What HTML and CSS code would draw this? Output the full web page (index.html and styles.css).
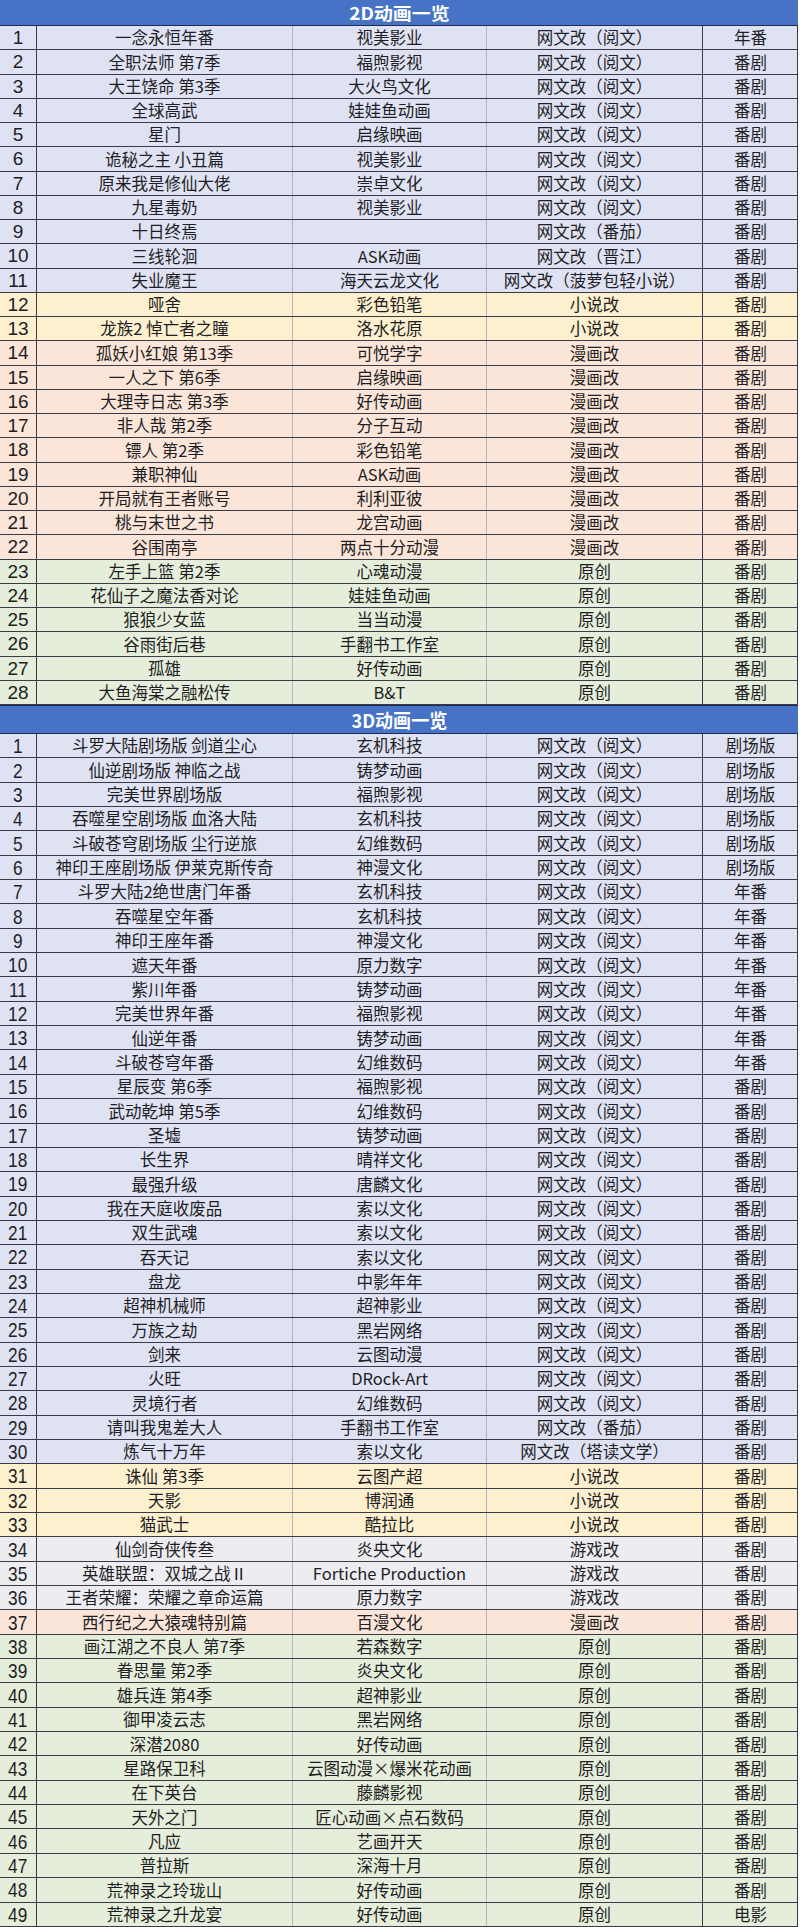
FILE: index.html
```html
<!DOCTYPE html>
<html lang="zh-CN">
<head>
<meta charset="utf-8">
<title>动画一览</title>
<link rel="stylesheet" href="styles.css">
</head>
<body>
<div class="sheet">
  <section class="block b2d">
    <div class="title"><span>2D动画一览</span></div>
    <div class="row lav"><div class="c"><span>1</span></div><div class="c"><span>一念永恒年番</span></div><div class="c"><span>视美影业</span></div><div class="c"><span>网文改（阅文）</span></div><div class="c"><span>年番</span></div></div>
    <div class="row lav"><div class="c"><span>2</span></div><div class="c"><span>全职法师 第7季</span></div><div class="c"><span>福煦影视</span></div><div class="c"><span>网文改（阅文）</span></div><div class="c"><span>番剧</span></div></div>
    <div class="row lav"><div class="c"><span>3</span></div><div class="c"><span>大王饶命 第3季</span></div><div class="c"><span>大火鸟文化</span></div><div class="c"><span>网文改（阅文）</span></div><div class="c"><span>番剧</span></div></div>
    <div class="row lav"><div class="c"><span>4</span></div><div class="c"><span>全球高武</span></div><div class="c"><span>娃娃鱼动画</span></div><div class="c"><span>网文改（阅文）</span></div><div class="c"><span>番剧</span></div></div>
    <div class="row lav"><div class="c"><span>5</span></div><div class="c"><span>星门</span></div><div class="c"><span>启缘映画</span></div><div class="c"><span>网文改（阅文）</span></div><div class="c"><span>番剧</span></div></div>
    <div class="row lav"><div class="c"><span>6</span></div><div class="c"><span>诡秘之主 小丑篇</span></div><div class="c"><span>视美影业</span></div><div class="c"><span>网文改（阅文）</span></div><div class="c"><span>番剧</span></div></div>
    <div class="row lav"><div class="c"><span>7</span></div><div class="c"><span>原来我是修仙大佬</span></div><div class="c"><span>崇卓文化</span></div><div class="c"><span>网文改（阅文）</span></div><div class="c"><span>番剧</span></div></div>
    <div class="row lav"><div class="c"><span>8</span></div><div class="c"><span>九星毒奶</span></div><div class="c"><span>视美影业</span></div><div class="c"><span>网文改（阅文）</span></div><div class="c"><span>番剧</span></div></div>
    <div class="row lav"><div class="c"><span>9</span></div><div class="c"><span>十日终焉</span></div><div class="c"></div><div class="c"><span>网文改（番茄）</span></div><div class="c"><span>番剧</span></div></div>
    <div class="row lav"><div class="c"><span>10</span></div><div class="c"><span>三线轮洄</span></div><div class="c"><span>ASK动画</span></div><div class="c"><span>网文改（晋江）</span></div><div class="c"><span>番剧</span></div></div>
    <div class="row lav"><div class="c"><span>11</span></div><div class="c"><span>失业魔王</span></div><div class="c"><span>海天云龙文化</span></div><div class="c"><span>网文改（菠萝包轻小说）</span></div><div class="c"><span>番剧</span></div></div>
    <div class="row yel"><div class="c"><span>12</span></div><div class="c"><span>哑舍</span></div><div class="c"><span>彩色铅笔</span></div><div class="c"><span>小说改</span></div><div class="c"><span>番剧</span></div></div>
    <div class="row yel"><div class="c"><span>13</span></div><div class="c"><span>龙族2 悼亡者之瞳</span></div><div class="c"><span>洛水花原</span></div><div class="c"><span>小说改</span></div><div class="c"><span>番剧</span></div></div>
    <div class="row pea"><div class="c"><span>14</span></div><div class="c"><span>孤妖小红娘 第13季</span></div><div class="c"><span>可悦学字</span></div><div class="c"><span>漫画改</span></div><div class="c"><span>番剧</span></div></div>
    <div class="row pea"><div class="c"><span>15</span></div><div class="c"><span>一人之下 第6季</span></div><div class="c"><span>启缘映画</span></div><div class="c"><span>漫画改</span></div><div class="c"><span>番剧</span></div></div>
    <div class="row pea"><div class="c"><span>16</span></div><div class="c"><span>大理寺日志 第3季</span></div><div class="c"><span>好传动画</span></div><div class="c"><span>漫画改</span></div><div class="c"><span>番剧</span></div></div>
    <div class="row pea"><div class="c"><span>17</span></div><div class="c"><span>非人哉 第2季</span></div><div class="c"><span>分子互动</span></div><div class="c"><span>漫画改</span></div><div class="c"><span>番剧</span></div></div>
    <div class="row pea"><div class="c"><span>18</span></div><div class="c"><span>镖人 第2季</span></div><div class="c"><span>彩色铅笔</span></div><div class="c"><span>漫画改</span></div><div class="c"><span>番剧</span></div></div>
    <div class="row pea"><div class="c"><span>19</span></div><div class="c"><span>兼职神仙</span></div><div class="c"><span>ASK动画</span></div><div class="c"><span>漫画改</span></div><div class="c"><span>番剧</span></div></div>
    <div class="row pea"><div class="c"><span>20</span></div><div class="c"><span>开局就有王者账号</span></div><div class="c"><span>利利亚彼</span></div><div class="c"><span>漫画改</span></div><div class="c"><span>番剧</span></div></div>
    <div class="row pea"><div class="c"><span>21</span></div><div class="c"><span>桃与末世之书</span></div><div class="c"><span>龙宫动画</span></div><div class="c"><span>漫画改</span></div><div class="c"><span>番剧</span></div></div>
    <div class="row pea"><div class="c"><span>22</span></div><div class="c"><span>谷围南亭</span></div><div class="c"><span>两点十分动漫</span></div><div class="c"><span>漫画改</span></div><div class="c"><span>番剧</span></div></div>
    <div class="row grn"><div class="c"><span>23</span></div><div class="c"><span>左手上篮 第2季</span></div><div class="c"><span>心魂动漫</span></div><div class="c"><span>原创</span></div><div class="c"><span>番剧</span></div></div>
    <div class="row grn"><div class="c"><span>24</span></div><div class="c"><span>花仙子之魔法香对论</span></div><div class="c"><span>娃娃鱼动画</span></div><div class="c"><span>原创</span></div><div class="c"><span>番剧</span></div></div>
    <div class="row grn"><div class="c"><span>25</span></div><div class="c"><span>狼狼少女蓝</span></div><div class="c"><span>当当动漫</span></div><div class="c"><span>原创</span></div><div class="c"><span>番剧</span></div></div>
    <div class="row grn"><div class="c"><span>26</span></div><div class="c"><span>谷雨街后巷</span></div><div class="c"><span>手翻书工作室</span></div><div class="c"><span>原创</span></div><div class="c"><span>番剧</span></div></div>
    <div class="row grn"><div class="c"><span>27</span></div><div class="c"><span>孤雄</span></div><div class="c"><span>好传动画</span></div><div class="c"><span>原创</span></div><div class="c"><span>番剧</span></div></div>
    <div class="row grn"><div class="c"><span>28</span></div><div class="c"><span>大鱼海棠之融松传</span></div><div class="c"><span>B&amp;T</span></div><div class="c"><span>原创</span></div><div class="c"><span>番剧</span></div></div>
  </section>
  <section class="block b3d">
    <div class="title"><span>3D动画一览</span></div>
    <div class="row lav"><div class="c"><span>1</span></div><div class="c"><span>斗罗大陆剧场版 剑道尘心</span></div><div class="c"><span>玄机科技</span></div><div class="c"><span>网文改（阅文）</span></div><div class="c"><span>剧场版</span></div></div>
    <div class="row lav"><div class="c"><span>2</span></div><div class="c"><span>仙逆剧场版 神临之战</span></div><div class="c"><span>铸梦动画</span></div><div class="c"><span>网文改（阅文）</span></div><div class="c"><span>剧场版</span></div></div>
    <div class="row lav"><div class="c"><span>3</span></div><div class="c"><span>完美世界剧场版</span></div><div class="c"><span>福煦影视</span></div><div class="c"><span>网文改（阅文）</span></div><div class="c"><span>剧场版</span></div></div>
    <div class="row lav"><div class="c"><span>4</span></div><div class="c"><span>吞噬星空剧场版 血洛大陆</span></div><div class="c"><span>玄机科技</span></div><div class="c"><span>网文改（阅文）</span></div><div class="c"><span>剧场版</span></div></div>
    <div class="row lav"><div class="c"><span>5</span></div><div class="c"><span>斗破苍穹剧场版 尘行逆旅</span></div><div class="c"><span>幻维数码</span></div><div class="c"><span>网文改（阅文）</span></div><div class="c"><span>剧场版</span></div></div>
    <div class="row lav"><div class="c"><span>6</span></div><div class="c"><span>神印王座剧场版 伊莱克斯传奇</span></div><div class="c"><span>神漫文化</span></div><div class="c"><span>网文改（阅文）</span></div><div class="c"><span>剧场版</span></div></div>
    <div class="row lav"><div class="c"><span>7</span></div><div class="c"><span>斗罗大陆2绝世唐门年番</span></div><div class="c"><span>玄机科技</span></div><div class="c"><span>网文改（阅文）</span></div><div class="c"><span>年番</span></div></div>
    <div class="row lav"><div class="c"><span>8</span></div><div class="c"><span>吞噬星空年番</span></div><div class="c"><span>玄机科技</span></div><div class="c"><span>网文改（阅文）</span></div><div class="c"><span>年番</span></div></div>
    <div class="row lav"><div class="c"><span>9</span></div><div class="c"><span>神印王座年番</span></div><div class="c"><span>神漫文化</span></div><div class="c"><span>网文改（阅文）</span></div><div class="c"><span>年番</span></div></div>
    <div class="row lav"><div class="c"><span>10</span></div><div class="c"><span>遮天年番</span></div><div class="c"><span>原力数字</span></div><div class="c"><span>网文改（阅文）</span></div><div class="c"><span>年番</span></div></div>
    <div class="row lav"><div class="c"><span>11</span></div><div class="c"><span>紫川年番</span></div><div class="c"><span>铸梦动画</span></div><div class="c"><span>网文改（阅文）</span></div><div class="c"><span>年番</span></div></div>
    <div class="row lav"><div class="c"><span>12</span></div><div class="c"><span>完美世界年番</span></div><div class="c"><span>福煦影视</span></div><div class="c"><span>网文改（阅文）</span></div><div class="c"><span>年番</span></div></div>
    <div class="row lav"><div class="c"><span>13</span></div><div class="c"><span>仙逆年番</span></div><div class="c"><span>铸梦动画</span></div><div class="c"><span>网文改（阅文）</span></div><div class="c"><span>年番</span></div></div>
    <div class="row lav"><div class="c"><span>14</span></div><div class="c"><span>斗破苍穹年番</span></div><div class="c"><span>幻维数码</span></div><div class="c"><span>网文改（阅文）</span></div><div class="c"><span>年番</span></div></div>
    <div class="row lav"><div class="c"><span>15</span></div><div class="c"><span>星辰变 第6季</span></div><div class="c"><span>福煦影视</span></div><div class="c"><span>网文改（阅文）</span></div><div class="c"><span>番剧</span></div></div>
    <div class="row lav"><div class="c"><span>16</span></div><div class="c"><span>武动乾坤 第5季</span></div><div class="c"><span>幻维数码</span></div><div class="c"><span>网文改（阅文）</span></div><div class="c"><span>番剧</span></div></div>
    <div class="row lav"><div class="c"><span>17</span></div><div class="c"><span>圣墟</span></div><div class="c"><span>铸梦动画</span></div><div class="c"><span>网文改（阅文）</span></div><div class="c"><span>番剧</span></div></div>
    <div class="row lav"><div class="c"><span>18</span></div><div class="c"><span>长生界</span></div><div class="c"><span>晴祥文化</span></div><div class="c"><span>网文改（阅文）</span></div><div class="c"><span>番剧</span></div></div>
    <div class="row lav"><div class="c"><span>19</span></div><div class="c"><span>最强升级</span></div><div class="c"><span>唐麟文化</span></div><div class="c"><span>网文改（阅文）</span></div><div class="c"><span>番剧</span></div></div>
    <div class="row lav"><div class="c"><span>20</span></div><div class="c"><span>我在天庭收废品</span></div><div class="c"><span>索以文化</span></div><div class="c"><span>网文改（阅文）</span></div><div class="c"><span>番剧</span></div></div>
    <div class="row lav"><div class="c"><span>21</span></div><div class="c"><span>双生武魂</span></div><div class="c"><span>索以文化</span></div><div class="c"><span>网文改（阅文）</span></div><div class="c"><span>番剧</span></div></div>
    <div class="row lav"><div class="c"><span>22</span></div><div class="c"><span>吞天记</span></div><div class="c"><span>索以文化</span></div><div class="c"><span>网文改（阅文）</span></div><div class="c"><span>番剧</span></div></div>
    <div class="row lav"><div class="c"><span>23</span></div><div class="c"><span>盘龙</span></div><div class="c"><span>中影年年</span></div><div class="c"><span>网文改（阅文）</span></div><div class="c"><span>番剧</span></div></div>
    <div class="row lav"><div class="c"><span>24</span></div><div class="c"><span>超神机械师</span></div><div class="c"><span>超神影业</span></div><div class="c"><span>网文改（阅文）</span></div><div class="c"><span>番剧</span></div></div>
    <div class="row lav"><div class="c"><span>25</span></div><div class="c"><span>万族之劫</span></div><div class="c"><span>黑岩网络</span></div><div class="c"><span>网文改（阅文）</span></div><div class="c"><span>番剧</span></div></div>
    <div class="row lav"><div class="c"><span>26</span></div><div class="c"><span>剑来</span></div><div class="c"><span>云图动漫</span></div><div class="c"><span>网文改（阅文）</span></div><div class="c"><span>番剧</span></div></div>
    <div class="row lav"><div class="c"><span>27</span></div><div class="c"><span>火旺</span></div><div class="c"><span>DRock-Art</span></div><div class="c"><span>网文改（阅文）</span></div><div class="c"><span>番剧</span></div></div>
    <div class="row lav"><div class="c"><span>28</span></div><div class="c"><span>灵境行者</span></div><div class="c"><span>幻维数码</span></div><div class="c"><span>网文改（阅文）</span></div><div class="c"><span>番剧</span></div></div>
    <div class="row lav"><div class="c"><span>29</span></div><div class="c"><span>请叫我鬼差大人</span></div><div class="c"><span>手翻书工作室</span></div><div class="c"><span>网文改（番茄）</span></div><div class="c"><span>番剧</span></div></div>
    <div class="row lav"><div class="c"><span>30</span></div><div class="c"><span>炼气十万年</span></div><div class="c"><span>索以文化</span></div><div class="c"><span>网文改（塔读文学）</span></div><div class="c"><span>番剧</span></div></div>
    <div class="row yel"><div class="c"><span>31</span></div><div class="c"><span>诛仙 第3季</span></div><div class="c"><span>云图产超</span></div><div class="c"><span>小说改</span></div><div class="c"><span>番剧</span></div></div>
    <div class="row yel"><div class="c"><span>32</span></div><div class="c"><span>天影</span></div><div class="c"><span>博润通</span></div><div class="c"><span>小说改</span></div><div class="c"><span>番剧</span></div></div>
    <div class="row yel"><div class="c"><span>33</span></div><div class="c"><span>猫武士</span></div><div class="c"><span>酷拉比</span></div><div class="c"><span>小说改</span></div><div class="c"><span>番剧</span></div></div>
    <div class="row gry"><div class="c"><span>34</span></div><div class="c"><span>仙剑奇侠传叁</span></div><div class="c"><span>炎央文化</span></div><div class="c"><span>游戏改</span></div><div class="c"><span>番剧</span></div></div>
    <div class="row gry"><div class="c"><span>35</span></div><div class="c"><span>英雄联盟：双城之战Ⅱ</span></div><div class="c"><span>Fortiche Production</span></div><div class="c"><span>游戏改</span></div><div class="c"><span>番剧</span></div></div>
    <div class="row gry"><div class="c"><span>36</span></div><div class="c"><span>王者荣耀：荣耀之章命运篇</span></div><div class="c"><span>原力数字</span></div><div class="c"><span>游戏改</span></div><div class="c"><span>番剧</span></div></div>
    <div class="row pea"><div class="c"><span>37</span></div><div class="c"><span>西行纪之大猿魂特别篇</span></div><div class="c"><span>百漫文化</span></div><div class="c"><span>漫画改</span></div><div class="c"><span>番剧</span></div></div>
    <div class="row grn"><div class="c"><span>38</span></div><div class="c"><span>画江湖之不良人 第7季</span></div><div class="c"><span>若森数字</span></div><div class="c"><span>原创</span></div><div class="c"><span>番剧</span></div></div>
    <div class="row grn"><div class="c"><span>39</span></div><div class="c"><span>眷思量 第2季</span></div><div class="c"><span>炎央文化</span></div><div class="c"><span>原创</span></div><div class="c"><span>番剧</span></div></div>
    <div class="row grn"><div class="c"><span>40</span></div><div class="c"><span>雄兵连 第4季</span></div><div class="c"><span>超神影业</span></div><div class="c"><span>原创</span></div><div class="c"><span>番剧</span></div></div>
    <div class="row grn"><div class="c"><span>41</span></div><div class="c"><span>御甲凌云志</span></div><div class="c"><span>黑岩网络</span></div><div class="c"><span>原创</span></div><div class="c"><span>番剧</span></div></div>
    <div class="row grn"><div class="c"><span>42</span></div><div class="c"><span>深潜2080</span></div><div class="c"><span>好传动画</span></div><div class="c"><span>原创</span></div><div class="c"><span>番剧</span></div></div>
    <div class="row grn"><div class="c"><span>43</span></div><div class="c"><span>星路保卫科</span></div><div class="c"><span>云图动漫×爆米花动画</span></div><div class="c"><span>原创</span></div><div class="c"><span>番剧</span></div></div>
    <div class="row grn"><div class="c"><span>44</span></div><div class="c"><span>在下英台</span></div><div class="c"><span>藤麟影视</span></div><div class="c"><span>原创</span></div><div class="c"><span>番剧</span></div></div>
    <div class="row grn"><div class="c"><span>45</span></div><div class="c"><span>天外之门</span></div><div class="c"><span>匠心动画×点石数码</span></div><div class="c"><span>原创</span></div><div class="c"><span>番剧</span></div></div>
    <div class="row grn"><div class="c"><span>46</span></div><div class="c"><span>凡应</span></div><div class="c"><span>艺画开天</span></div><div class="c"><span>原创</span></div><div class="c"><span>番剧</span></div></div>
    <div class="row grn"><div class="c"><span>47</span></div><div class="c"><span>普拉斯</span></div><div class="c"><span>深海十月</span></div><div class="c"><span>原创</span></div><div class="c"><span>番剧</span></div></div>
    <div class="row grn"><div class="c"><span>48</span></div><div class="c"><span>荒神录之玲珑山</span></div><div class="c"><span>好传动画</span></div><div class="c"><span>原创</span></div><div class="c"><span>番剧</span></div></div>
    <div class="row grn"><div class="c"><span>49</span></div><div class="c"><span>荒神录之升龙宴</span></div><div class="c"><span>好传动画</span></div><div class="c"><span>原创</span></div><div class="c"><span>电影</span></div></div>
  </section>
</div>
</body>
</html>
```
FILE: styles.css
```css
html, body {
  margin: 0;
  padding: 0;
  background: #ffffff;
}

body {
  font-family: "Noto Sans CJK SC", "Noto Sans", sans-serif;
  color: #1e1e24;
}

.sheet {
  width: 798px;
  display: flex;
  flex-direction: column;
}

.block {
  display: flex;
  flex-direction: column;
}

.title {
  display: flex;
  align-items: center;
  justify-content: center;
  background: #4673c6;
  color: #ffffff;
  font-weight: 700;
  font-size: 17.5px;
  line-height: 1;
  box-sizing: border-box;
  border-bottom: 1px solid #1f2b52;
}

.title span {
  display: inline-block;
  transform: scaleX(1.08);
}

.b2d .title {
  height: 26px;
}

.b3d .title {
  height: 29px;
  border-top: 1px solid #1f2b52;
  font-size: 19px;
}

.b3d .title span {
  transform: scaleX(0.95);
}

.row {
  display: grid;
  grid-template-columns: 37px 256px 194px 216px 95px;
  box-sizing: border-box;
  border-bottom: 1px solid #3b3b48;
  border-right: 1px solid #3b3b48;
}

.b2d .row {
  height: 24.25px;
}

.b3d .row {
  height: 24.35px;
}

.c {
  display: flex;
  align-items: center;
  justify-content: center;
  white-space: nowrap;
  font-size: 16.5px;
  line-height: 1;
  box-sizing: border-box;
  border-right: 1px solid #b3b5c4;
}

.c:first-child {
  border-right-color: #3b3b48;
  font-family: "Liberation Sans", Arial, sans-serif;
  font-size: 19px;
}

.c:nth-child(4) {
  border-right-color: #3b3b48;
}

.c:last-child {
  border-right: none;
}

.b3d .c:first-child {
  font-size: 21px;
}

.b3d .c:first-child span {
  display: inline-block;
  transform: scaleX(0.82);
}

.lav { background: #dfe2f3; }
.yel { background: #fdf0cf; }
.pea { background: #fbe5d8; }
.grn { background: #e5eedb; }
.gry { background: #ececf1; }
```
